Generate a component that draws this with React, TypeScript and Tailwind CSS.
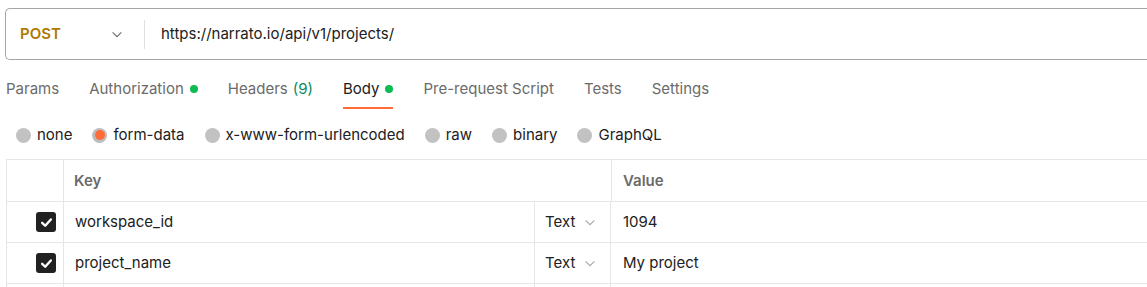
import React from "react";

const Chevron = ({ className }: { className?: string }) => (
  <svg viewBox="0 0 12 8" className={className} fill="none" stroke="currentColor" strokeWidth="1.2">
    <path d="M1 1.5 L6 6.5 L11 1.5" />
  </svg>
);

const Dot = () => <span className="ml-[6px] inline-block h-[8px] w-[8px] rounded-full bg-[#0cbb52]" />;

const Check = () => (
  <div className="flex h-[20px] w-[20px] items-center justify-center rounded-[3px] bg-[#212121]">
    <svg viewBox="0 0 12 12" className="h-[13px] w-[13px]" fill="none" stroke="white" strokeWidth="2.2" strokeLinecap="round" strokeLinejoin="round">
      <path d="M2 6.3 L4.8 9 L10 3.2" />
    </svg>
  </div>
);

export default function App() {
  const tabs = [
    { label: "Params" },
    { label: "Authorization", dot: true },
    { label: "Headers", count: "(9)" },
    { label: "Body", dot: true, active: true },
    { label: "Pre-request Script" },
    { label: "Tests" },
    { label: "Settings" },
  ];
  const radios = [
    { label: "none" },
    { label: "form-data", active: true },
    { label: "x-www-form-urlencoded" },
    { label: "raw" },
    { label: "binary" },
    { label: "GraphQL" },
  ];
  const rows = [
    { key: "workspace_id", value: "1094" },
    { key: "project_name", value: "My project" },
  ];
  return (
    <div className="h-[287px] w-full overflow-hidden bg-white text-[15px] text-[#212121]" style={{ fontFamily: "Inter, 'Noto Sans', sans-serif" }}>
      <div className="pl-[5px] pt-[8px]">
        <div className="flex h-[52px] items-center rounded-l-[5px] border border-r-0 border-[#a6a6a6]">
          <div className="flex w-[138px] items-center pl-[14px]">
            <span className="font-semibold text-[#ad7a03]">POST</span>
            <Chevron className="ml-auto mr-[21px] h-[7px] w-[12px] text-[#6b6b6b]" />
          </div>
          <div className="h-[29px] w-px bg-[#e0e0e0]" />
          <div className="pl-[16px]">https://narrato.io/api/v1/projects/</div>
        </div>
      </div>

      <div className="mt-[9px] flex gap-[30px] pl-[6px]">
        {tabs.map((t) => (
          <div
            key={t.label}
            className={`flex h-[40px] items-start border-b-2 pt-[10px] ${t.active ? "border-[#ff6c37] text-[#212121]" : "border-transparent text-[#6b6b6b]"}`}
          >
            <div className="flex h-[20px] items-center">
              <span>{t.label}</span>
              {t.count && <span className="ml-[5px] text-[#0a8a5c]">{t.count}</span>}
              {t.dot && <Dot />}
            </div>
          </div>
        ))}
      </div>

      <div className="mt-[16px] flex h-[20px] items-center gap-[20px] pl-[16px]">
        {radios.map((r) => (
          <div key={r.label} className="flex items-center gap-[6px]">
            {r.active ? (
              <span className="flex h-[15px] w-[15px] items-center justify-center rounded-full bg-[#bdbdbd]">
                <span className="h-[10px] w-[10px] rounded-full bg-[#ff6c37]" />
              </span>
            ) : (
              <span className="h-[15px] w-[15px] rounded-full bg-[#c2c2c2]" />
            )}
            <span>{r.label}</span>
          </div>
        ))}
      </div>

      <div className="ml-[6px] mt-[14px] border-t border-[#e6e6e6]">
        <div className="flex h-[41px] border-l border-[#e6e6e6]">
          <div className="w-[57px] border-r border-[#e6e6e6]" />
          <div className="flex w-[548px] items-center border-r border-[#e6e6e6] pl-[10px] pt-[1px] font-semibold text-[#6b6b6b]">Key</div>
          <div className="flex flex-1 items-center pl-[11px] pt-[1px] font-semibold text-[#6b6b6b]">Value</div>
        </div>
        {rows.map((r) => (
          <div key={r.key} className="flex h-[41px] border-l border-t border-[#e6e6e6]">
            <div className="flex w-[57px] items-center justify-end border-r border-[#e6e6e6] pr-[7px]">
              <Check />
            </div>
            <div className="flex w-[471px] items-center border-r border-[#e6e6e6] pl-[11px]">{r.key}</div>
            <div className="flex w-[76px] items-center border-r border-[#e6e6e6] pl-[10px] text-[#212121]">
              <span>Text</span>
              <Chevron className="ml-[9px] h-[7px] w-[12px] text-[#a6a6a6]" />
            </div>
            <div className="flex flex-1 items-center pl-[12px]">{r.value}</div>
          </div>
        ))}
        <div className="flex h-[41px] border-l border-t border-[#e6e6e6]">
          <div className="w-[57px] border-r border-[#e6e6e6]" />
          <div className="w-[471px] border-r border-[#e6e6e6]" />
          <div className="w-[76px] border-r border-[#e6e6e6]" />
          <div className="flex-1" />
        </div>
      </div>
    </div>
  );
}
